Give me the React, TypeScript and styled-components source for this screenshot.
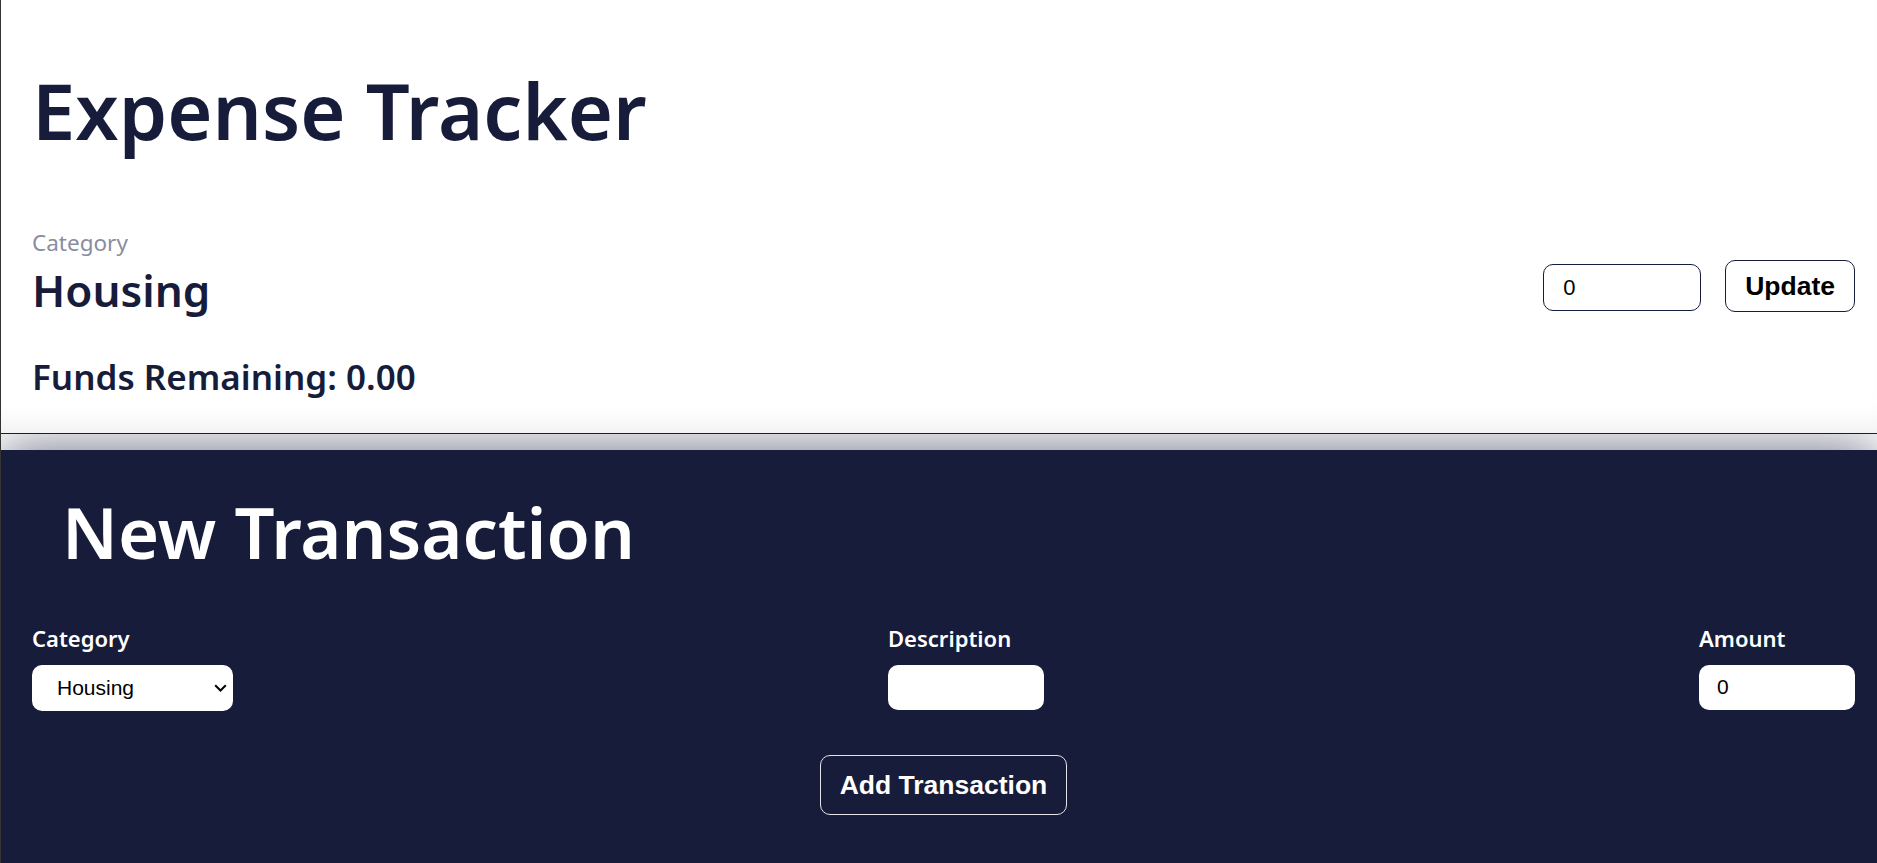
import React, { useState } from "react";
import styled, { createGlobalStyle } from "styled-components";

const navy = "#161c3a";

const GlobalStyle = createGlobalStyle`
  html, body {
    margin: 0;
    padding: 0;
    background: #ffffff;
  }
  body {
    font-family: "Noto Sans", "Open Sans", sans-serif;
    color: ${navy};
  }
  * {
    box-sizing: border-box;
  }
`;

const Page = styled.div`
  display: flex;
  flex-direction: column;
  min-height: 100vh;
  border-left: 1px solid #333333;
  overflow: hidden;
`;

const Header = styled.header`
  position: relative;
  background: #ffffff;
  padding: 72px 22px 39px 31px;
  border-bottom: 1px solid ${navy};
  box-shadow: inset 0 -22px 22px -14px rgba(22, 28, 58, 0.07);
`;

const Title = styled.h1`
  margin: 0 0 82px;
  font-size: 77.5px;
  line-height: 1;
  font-weight: 600;
  color: ${navy};
`;

const BudgetRow = styled.div`
  display: flex;
  justify-content: space-between;
  align-items: flex-end;
`;

const CategoryBlock = styled.div`
  display: flex;
  flex-direction: column;
  gap: 14px;
`;

const SmallLabel = styled.span`
  font-size: 22.5px;
  line-height: 1;
  color: #8a8d9f;
`;

const CategoryName = styled.h2`
  margin: 0;
  font-size: 44px;
  line-height: 1;
  font-weight: 600;
  color: ${navy};
`;

const BudgetControls = styled.div`
  display: flex;
  align-items: flex-end;
  gap: 24px;
`;

const BudgetInput = styled.input`
  width: 158px;
  height: 47px;
  margin-bottom: 1px;
  padding: 0 0 0 19px;
  border: 1px solid ${navy};
  border-radius: 10px;
  font-family: "Liberation Sans", Arial, sans-serif;
  font-size: 22px;
  color: #000000;
  background: #ffffff;
  outline: none;
`;

const Button = styled.button<{ $dark?: boolean }>`
  padding: ${(p) => (p.$dark ? "14px 19px" : "10px 19px")};
  border: 1px solid ${(p) => (p.$dark ? "#e4e4ea" : navy)};
  border-radius: 10px;
  background: ${(p) => (p.$dark ? "transparent" : "#ffffff")};
  color: ${(p) => (p.$dark ? "#ffffff" : "#000000")};
  font-family: "Liberation Sans", Arial, sans-serif;
  font-size: 26.5px;
  font-weight: 700;
  line-height: 1.15;
  cursor: pointer;
`;

const Funds = styled.h3`
  margin: 47px 0 0;
  font-size: 35px;
  line-height: 1;
  font-weight: 600;
  color: ${navy};
`;

const TransactionPanel = styled.section`
  flex: 1;
  margin-top: 16px;
  padding: 47px 22px 48px 31px;
  background: ${navy};
  color: #ffffff;
  box-shadow: 0 0 50px rgba(22, 28, 58, 0.65);
`;

const PanelTitle = styled.h2`
  margin: 0 0 59px 30px;
  font-size: 70.5px;
  line-height: 1;
  font-weight: 600;
  color: #ffffff;
`;

const FormRow = styled.div`
  display: flex;
  justify-content: space-between;
  align-items: flex-start;
`;

const Field = styled.label`
  display: flex;
  flex-direction: column;
  gap: 16px;
`;

const FieldLabel = styled.span`
  font-size: 22px;
  line-height: 1;
  font-weight: 600;
  color: #ffffff;
`;

const SelectWrap = styled.div`
  position: relative;
  width: 201px;
`;

const Select = styled.select`
  appearance: none;
  width: 100%;
  height: 46px;
  padding: 0 28px 0 25px;
  border: none;
  border-radius: 10px;
  background: #ffffff;
  font-family: "Liberation Sans", Arial, sans-serif;
  font-size: 21px;
  color: #000000;
  outline: none;
`;

const Chevron = styled.svg`
  position: absolute;
  right: 6px;
  top: 19px;
  width: 13px;
  height: 8px;
  pointer-events: none;
`;

const TextInput = styled.input`
  width: 156px;
  height: 45px;
  padding: 0 0 0 18px;
  border: none;
  border-radius: 10px;
  background: #ffffff;
  font-family: "Liberation Sans", Arial, sans-serif;
  font-size: 21px;
  color: #000000;
  outline: none;
`;

const Actions = styled.div`
  display: flex;
  justify-content: center;
  margin-top: 44px;
`;

const categories = ["Housing", "Food", "Transportation", "Utilities", "Entertainment", "Other"];

const App = () => {
  const [budget, setBudget] = useState("0");
  const [category, setCategory] = useState("Housing");
  const [description, setDescription] = useState("");
  const [amount, setAmount] = useState("0");

  return (
    <>
      <GlobalStyle />
      <Page>
        <Header>
          <Title>Expense Tracker</Title>
          <BudgetRow>
            <CategoryBlock>
              <SmallLabel>Category</SmallLabel>
              <CategoryName>Housing</CategoryName>
            </CategoryBlock>
            <BudgetControls>
              <BudgetInput
                type="number"
                value={budget}
                onChange={(e) => setBudget(e.target.value)}
              />
              <Button>Update</Button>
            </BudgetControls>
          </BudgetRow>
          <Funds>Funds Remaining: 0.00</Funds>
        </Header>

        <TransactionPanel>
          <PanelTitle>New Transaction</PanelTitle>
          <FormRow>
            <Field>
              <FieldLabel>Category</FieldLabel>
              <SelectWrap>
                <Select value={category} onChange={(e) => setCategory(e.target.value)}>
                  {categories.map((c) => (
                    <option key={c}>{c}</option>
                  ))}
                </Select>
                <Chevron viewBox="0 0 13 8">
                  <polyline
                    points="1.2,1.2 6.5,6.5 11.8,1.2"
                    fill="none"
                    stroke="#000000"
                    strokeWidth="2"
                  />
                </Chevron>
              </SelectWrap>
            </Field>
            <Field>
              <FieldLabel>Description</FieldLabel>
              <TextInput
                type="text"
                value={description}
                onChange={(e) => setDescription(e.target.value)}
              />
            </Field>
            <Field>
              <FieldLabel>Amount</FieldLabel>
              <TextInput
                type="number"
                value={amount}
                onChange={(e) => setAmount(e.target.value)}
              />
            </Field>
          </FormRow>
          <Actions>
            <Button $dark>Add Transaction</Button>
          </Actions>
        </TransactionPanel>
      </Page>
    </>
  );
};

export default App;
